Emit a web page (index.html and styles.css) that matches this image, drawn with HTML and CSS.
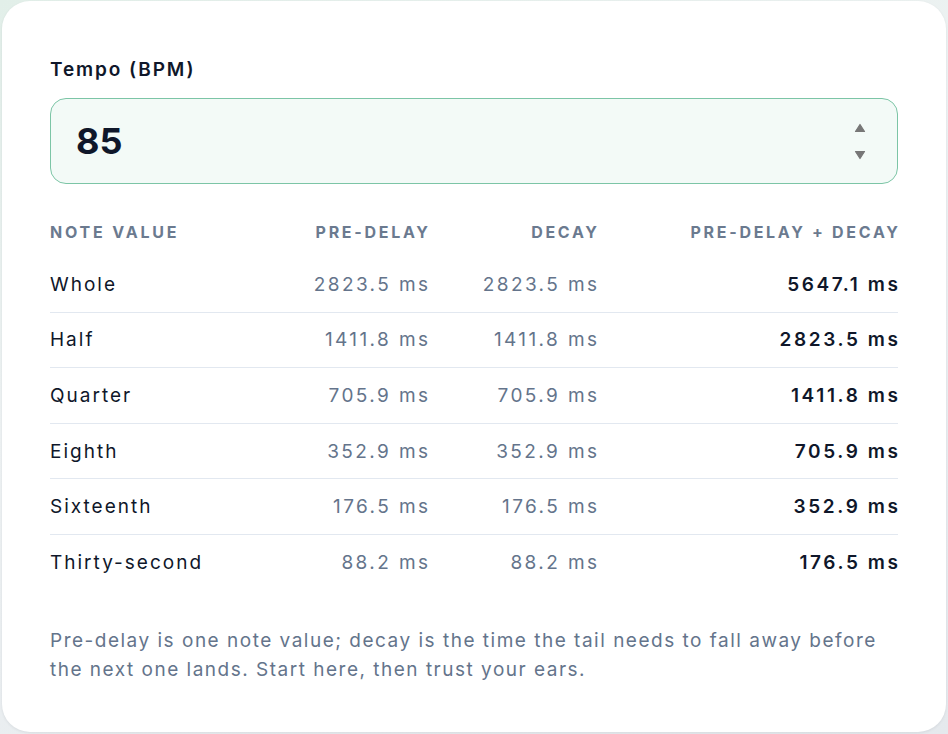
FILE: index.html
```html
<!DOCTYPE html>
<html lang="en">
<head>
<meta charset="utf-8">
<title>Tempo delay calculator</title>
<link rel="stylesheet" href="styles.css">
</head>
<body>
<main class="card">
  <label class="field-label" for="bpm">Tempo (BPM)</label>
  <div class="input-box">
    <span class="bpm-value" id="bpm">85</span>
    <span class="spinner">
      <svg width="12" height="10" viewBox="0 0 12 10"><path d="M6 1.5 L10.5 8.5 H1.5 Z" fill="#777777" stroke="#777777" stroke-linejoin="round" stroke-width="1.2"/></svg>
      <svg width="12" height="10" viewBox="0 0 12 10"><path d="M6 8.5 L10.5 1.5 H1.5 Z" fill="#777777" stroke="#777777" stroke-linejoin="round" stroke-width="1.2"/></svg>
    </span>
  </div>
  <div class="table">
    <div class="row head">
      <span class="c1">Note value</span><span class="c2">Pre-delay</span><span class="c3">Decay</span><span class="c4">Pre-delay + Decay</span>
    </div>
    <div class="row"><span class="c1">Whole</span><span class="c2">2823.5 ms</span><span class="c3">2823.5 ms</span><span class="c4">5647.1 ms</span></div>
    <div class="row"><span class="c1">Half</span><span class="c2">1411.8 ms</span><span class="c3">1411.8 ms</span><span class="c4">2823.5 ms</span></div>
    <div class="row"><span class="c1">Quarter</span><span class="c2">705.9 ms</span><span class="c3">705.9 ms</span><span class="c4">1411.8 ms</span></div>
    <div class="row"><span class="c1">Eighth</span><span class="c2">352.9 ms</span><span class="c3">352.9 ms</span><span class="c4">705.9 ms</span></div>
    <div class="row"><span class="c1">Sixteenth</span><span class="c2">176.5 ms</span><span class="c3">176.5 ms</span><span class="c4">352.9 ms</span></div>
    <div class="row last"><span class="c1">Thirty-second</span><span class="c2">88.2 ms</span><span class="c3">88.2 ms</span><span class="c4">176.5 ms</span></div>
  </div>
  <p class="note">Pre-delay is one note value; decay is the time the tail needs to fall away before the next one lands. Start here, then trust your ears.</p>
</main>
</body>
</html>
```
FILE: styles.css
```css
* { box-sizing: border-box; }
html, body { margin: 0; height: 100%; }
body {
  background: linear-gradient(160deg, #e2efe9 0%, #eef2f3 40%, #e5e9ed 100%);
  font-family: "Inter", "Noto Sans", sans-serif;
  color: #0f172a;
  padding: 1px 2px 2px 2px;
}
.card {
  background: #ffffff;
  border-radius: 28px;
  height: 731px;
  padding: 57px 48px 0 48px;
  box-shadow: 0 1px 3px rgba(15, 23, 42, 0.08);
}
.field-label {
  display: block;
  font-size: 19px;
  font-weight: 600;
  line-height: 24px;
  letter-spacing: 1.9px;
  color: #0f172a;
}
.input-box {
  margin-top: 16px;
  height: 86px;
  border: 1.5px solid #7cc5a6;
  border-radius: 16px;
  background: #f3faf7;
  display: flex;
  align-items: center;
  justify-content: space-between;
  padding: 0 31px 0 25px;
}
.bpm-value {
  font-size: 36px;
  font-weight: 700;
  color: #0f172a;
}
.spinner {
  display: flex;
  flex-direction: column;
  gap: 17px;
  margin-top: 1px;
}
.spinner svg { display: block; }
.table { margin-top: 25px; }
.row {
  display: grid;
  grid-template-columns: 1fr 150px 169px 301px;
  align-items: center;
  height: 55.6px;
  border-bottom: 1px solid #e2e8f0;
  font-size: 19px;
  letter-spacing: 1.9px;
}
.row > span { white-space: nowrap; }
.row .c1 { letter-spacing: 2px; }
.row .c2, .row .c3 { color: #64748b; letter-spacing: 2.4px; margin-right: -2.4px; text-align: right; }
.row .c4 { font-weight: 600; color: #0f172a; letter-spacing: 2.6px; margin-right: -2.6px; text-align: right; }
.row.last { border-bottom: none; }
.row.head {
  height: 48px;
  border-bottom: none;
  font-size: 16px;
  font-weight: 700;
  text-transform: uppercase;
  color: #6b7a8f;
  padding-bottom: 2px;
}
.row.head .c1 { letter-spacing: 2.8px; }
.row.head .c2, .row.head .c3, .row.head .c4 {
  color: #6b7a8f;
  font-weight: 700;
  letter-spacing: 2.7px;
  margin-right: -2.7px;
}
.note {
  margin: 35px 0 0;
  font-size: 19px;
  line-height: 29px;
  letter-spacing: 1.5px;
  color: #64748b;
}
```
